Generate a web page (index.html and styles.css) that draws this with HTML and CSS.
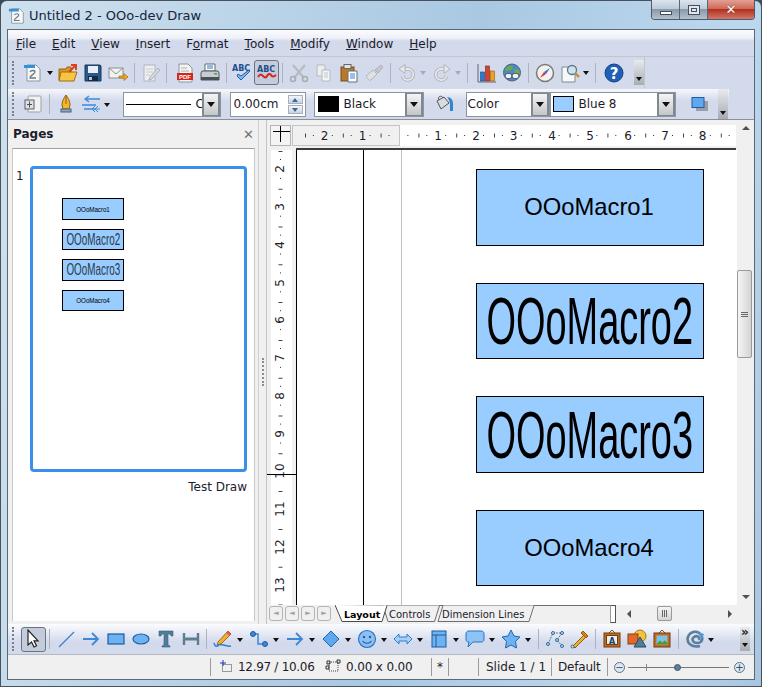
FILE: index.html
```html
<!DOCTYPE html>
<html lang="en">
<head>
<meta charset="utf-8">
<title>Untitled 2 - OOo-dev Draw</title>
<link rel="stylesheet" href="styles.css">
</head>
<body>
<svg class="defs" width="0" height="0">
<symbol id="newdoc" viewBox="0 0 20 20"><path d="M4 2h9l4 4v12H4z" fill="#f7f7f5" stroke="#8b98a4"/><rect x="1" y="2" width="11" height="3" fill="#2f93e0"/><path d="M7 9c1-2 5-2 5 0s-5 3-5 6h6" fill="none" stroke="#6d7a86" stroke-width="1.3"/></symbol>
<symbol id="open" viewBox="0 0 20 20"><path d="M1 6h7l1-2h4v13H1z" fill="#d99a20" stroke="#9a6410"/><path d="M3 9h16l-3 9H1z" fill="#f6c544" stroke="#a36c10"/><path d="M11 9l6-6M13 2h5v5" fill="none" stroke="#e0401c" stroke-width="2"/></symbol>
<symbol id="save" viewBox="0 0 20 20"><path d="M2 2h15l1 1v15H2z" fill="#2b5a8a" stroke="#17365a"/><rect x="5" y="3" width="10" height="7" fill="#e9eff5"/><rect x="5" y="13" width="10" height="5" fill="#0f2c4c"/><rect x="6" y="14" width="3" height="3" fill="#b8c6d6"/></symbol>
<symbol id="mail" viewBox="0 0 20 20"><rect x="1" y="5" width="14" height="10" fill="#f1f2f2" stroke="#8c8f92"/><path d="M1 5l7 6 7-6" fill="none" stroke="#8c8f92"/><path d="M11 13h5v-2.500l4 3.500-4 3.500V15h-5z" fill="#f0a81c" stroke="#a86f10" stroke-width=".7"/></symbol>
<symbol id="edit" viewBox="0 0 20 20"><path d="M3 2h11v16H3z" fill="#eceef2" stroke="#b2b6bc"/><path d="M5 6h7M5 9h7M5 12h4" stroke="#c8ccd2"/><path d="M9 14l8-9 2 2-8 9-3 1z" fill="#d8dade" stroke="#aeb2b8"/></symbol>
<symbol id="print" viewBox="0 0 20 20"><path d="M5 1h10v7H5z" fill="#fff" stroke="#5e6a74"/><path d="M7 3h6M7 5h6" stroke="#2f77bb"/><path d="M2 8h16l1 2v7H1v-7z" fill="#c8ccd0" stroke="#4e565c"/><rect x="1" y="14" width="18" height="3" fill="#4a5258"/><rect x="14" y="10" width="3" height="1.500" fill="#3fae49"/></symbol>
<symbol id="cut" viewBox="0 0 20 20"><path d="M4 2l11 13M16 2L5 15" stroke="#b6babe" stroke-width="2"/><circle cx="4" cy="16" r="2.500" fill="none" stroke="#a9adb2" stroke-width="1.500"/><circle cx="16" cy="16" r="2.500" fill="none" stroke="#a9adb2" stroke-width="1.500"/></symbol>
<symbol id="copy" viewBox="0 0 20 20"><path d="M3 2h8v11H3z" fill="#eceef0" stroke="#b5b9be"/><path d="M8 7h8v11H8z" fill="#f2f3f5" stroke="#b5b9be"/><path d="M10 10h4M10 12h4M10 14h4" stroke="#c4c8cc"/></symbol>
<symbol id="paste" viewBox="0 0 20 20"><rect x="2" y="4" width="13" height="14" fill="#b8792a" stroke="#7a4c14"/><rect x="5" y="1.500" width="7" height="4" fill="#e5e5e5" stroke="#666"/><path d="M9 8h9v11H9z" fill="#fff" stroke="#61707f"/><path d="M11 11h5M11 13h5M11 15h5" stroke="#3a80c5"/></symbol>
<symbol id="brush" viewBox="0 0 20 20"><path d="M2 13l7-6 4 4-6 6c-2 1-4-2-5-4z" fill="#dfe1e4" stroke="#b0b4b9"/><path d="M11 7l6-5 2 2-5 6z" fill="#c4c7cb" stroke="#adb1b6"/></symbol>
<symbol id="undo" viewBox="0 0 20 20"><path d="M7 6h4a5.500 5.500 0 1 1-5.500 7" fill="none" stroke="#b0b4ba" stroke-width="3.600"/><path d="M7 6h4a5.500 5.500 0 1 1-5.500 7" fill="none" stroke="#e6e8ec" stroke-width="1.800"/><path d="M8 1.500L2 6l6 4.500z" fill="#e6e8ec" stroke="#b0b4ba"/></symbol>
<symbol id="redo" viewBox="0 0 20 20"><path d="M13 6H9a5.500 5.500 0 1 0 5.500 7" fill="none" stroke="#b0b4ba" stroke-width="3.600"/><path d="M13 6H9a5.500 5.500 0 1 0 5.500 7" fill="none" stroke="#e6e8ec" stroke-width="1.800"/><path d="M12 1.500L18 6l-6 4.500z" fill="#e6e8ec" stroke="#b0b4ba"/></symbol>
<symbol id="chart" viewBox="0 0 20 20"><path d="M1 1v18h18" fill="none" stroke="#5c6670"/><rect x="3.500" y="9" width="4" height="9" fill="#3078c8" stroke="#1c4a80" stroke-width=".6"/><rect x="8.500" y="3" width="4" height="15" fill="#d9402a" stroke="#80221a" stroke-width=".6"/><rect x="13.500" y="8" width="4" height="10" fill="#f0a020" stroke="#8a5c12" stroke-width=".6"/></symbol>
<symbol id="globe" viewBox="0 0 20 20"><circle cx="10" cy="9.500" r="8.500" fill="#4e87c6" stroke="#456a8a"/><path d="M3 6c3-3 6-4 8-2l-2 3-5 1zM12 6l5 1 1 4-5-1z" fill="#71ac3c"/><path d="M3 11h14v3H3z" fill="#dde7ee"/><rect x="3" y="10.500" width="7" height="5" rx="2.500" fill="#eef2f5" stroke="#47525c"/><rect x="10" y="10.500" width="7" height="5" rx="2.500" fill="#eef2f5" stroke="#47525c"/></symbol>
<symbol id="compass" viewBox="0 0 20 20"><circle cx="10" cy="10" r="8.500" fill="#f2f2f0" stroke="#7d7a70" stroke-width="1.500"/><path d="M15 5L9 9l2 2z" fill="#2f6fd0"/><path d="M5 15l4-6 2 2z" fill="#e52a2a"/></symbol>
<symbol id="find" viewBox="0 0 20 20"><path d="M2 4h10l3 3v12H2z" fill="#f8f8f8" stroke="#7f8a94"/><circle cx="12" cy="7" r="4.500" fill="#c9e4f7" stroke="#627480" stroke-width="1.300"/><path d="M15 10l4 4" stroke="#c68c30" stroke-width="2.400"/></symbol>
<symbol id="pos" viewBox="0 0 20 20"><rect x="5" y="2" width="13" height="16" rx="1" fill="#f2f2f2" stroke="#9aa1a8"/><rect x="2" y="6" width="9" height="9" fill="#dfe1e3" stroke="#59636c"/><path d="M6.500 7.500v6M4 10.500h5" stroke="#4a5258"/></symbol>
<symbol id="pen" viewBox="0 0 20 20"><path d="M10 1c2 3 4 6 4 10l-1 4H7l-1-4c0-4 2-7 4-10z" fill="#f4b632" stroke="#8d5e10"/><path d="M10 2v8" stroke="#8d5e10"/><rect x="5" y="15" width="10" height="3" fill="#8fa6ba" stroke="#4a6076"/></symbol>
<symbol id="lines" viewBox="0 0 20 20"><path d="M19 5H5M8 2L4 5l4 3M1 11h14M15 15H3" fill="none" stroke="#3d8bdc" stroke-width="1.300"/><path d="M19 15h-5m3-3l-3 3 3 3m-6-3l3-3m0 6l-3-3" fill="none" stroke="#3d8bdc" stroke-width="1"/></symbol>
<symbol id="bucket" viewBox="0 0 20 20"><path d="M3 7l7-4 5 6-8 6z" fill="#d8dcdf" stroke="#555"/><path d="M5 6c-2-4 3-5 4-2" fill="none" stroke="#555"/><path d="M13 3c4 0 6 3 6 7v7h-3v-6c0-3-1-6-3-8z" fill="#2f86c8"/></symbol>
<symbol id="shadow" viewBox="0 0 20 20"><rect x="7" y="7" width="12" height="10" fill="#9a9ea8"/><rect x="3" y="3.500" width="12" height="10" fill="#5fa8ee" stroke="#1f5ca8"/></symbol>
<symbol id="cursor" viewBox="0 0 20 20"><path d="M5 1v15l3.500-3 2.500 5 2.500-1.200-2.500-5H15z" fill="#fff" stroke="#222" stroke-width="1.200"/></symbol>
<symbol id="line" viewBox="0 0 20 20"><path d="M3 18L18 3" stroke="#3e7fc6" stroke-width="1.300"/></symbol>
<symbol id="arrow" viewBox="0 0 20 20"><path d="M2 10h15M11 4l6 6-6 6" fill="none" stroke="#3e86d6" stroke-width="1.800"/></symbol>
<symbol id="rect" viewBox="0 0 20 20"><rect x="2" y="5" width="16" height="10" fill="#6fb2f0" stroke="#1c5aa4" stroke-width="1.200"/></symbol>
<symbol id="ellipse" viewBox="0 0 20 20"><ellipse cx="10" cy="10" rx="8" ry="5" fill="#6fb2f0" stroke="#1c5aa4" stroke-width="1.200"/></symbol>
<symbol id="tee" viewBox="0 0 20 20"><path d="M3 2h14v5h-2l-1-2h-2v11l2 1v1H6v-1l2-1V5H6L5 7H3z" fill="#4f7d99" stroke="#3a6078" stroke-width=".6"/></symbol>
<symbol id="dim" viewBox="0 0 20 20"><path d="M3 4v12M17 4v12" stroke="#5e7c92" stroke-width="2.400"/><path d="M3 10h14" stroke="#5e7c92" stroke-width="3"/></symbol>
<symbol id="pencil" viewBox="0 0 20 20"><path d="M5 13L15 2l3 3L8 15l-4 1z" fill="#f0b030" stroke="#a06c18"/><path d="M14 3l3 3" stroke="#e2487a" stroke-width="2"/><path d="M1 14c1 4 3 4 5 2s6 2 12 1" fill="none" stroke="#2f80d0" stroke-width="1.500"/></symbol>
<symbol id="conn" viewBox="0 0 20 20"><path d="M4 5h5v10h7" fill="none" stroke="#3e86d6" stroke-width="1.500"/><circle cx="4" cy="5" r="2.500" fill="#3e86d6" stroke="#1c5aa4"/><circle cx="16" cy="15" r="2.500" fill="#3e86d6" stroke="#1c5aa4"/></symbol>
<symbol id="diamond" viewBox="0 0 20 20"><path d="M10 2l8 8-8 8-8-8z" fill="#5fa8ee" stroke="#1f66b8"/></symbol>
<symbol id="smile" viewBox="0 0 20 20"><circle cx="10" cy="10" r="8.500" fill="#8cc0f2" stroke="#2b73c2" stroke-width="1.200"/><circle cx="7" cy="8" r="1.200" fill="#1f5ca8"/><circle cx="13" cy="8" r="1.200" fill="#1f5ca8"/><path d="M5.500 12c2 3 7 3 9 0" fill="none" stroke="#1f5ca8" stroke-width="1.200"/></symbol>
<symbol id="dbl" viewBox="0 0 20 20"><path d="M1 10l5-5v3h8V5l5 5-5 5v-3H6v3z" fill="#a8d0f6" stroke="#2f7fd0"/></symbol>
<symbol id="flow" viewBox="0 0 20 20"><rect x="3" y="2" width="14" height="16" fill="#6fb2f0" stroke="#1c5aa4"/><path d="M3 6h14M7 6v12" stroke="#1c5aa4"/></symbol>
<symbol id="callout" viewBox="0 0 20 20"><path d="M4 2h12c2 0 3 1 3 3v5c0 2-1 3-3 3H8l-5 5 1-5c-2 0-3-1-3-3V5c0-2 1-3 3-3z" fill="#8cc4f6" stroke="#2b73c2"/></symbol>
<symbol id="star" viewBox="0 0 20 20"><path d="M10 1l3 6 6 1-4.500 4.500 1 6.500-5.500-3-5.500 3 1-6.500L1 8l6-1z" fill="#6fb2f0" stroke="#1f66b8"/></symbol>
<symbol id="points" viewBox="0 0 20 20"><path d="M3 15L8 4h9l-5 7 5 6" fill="none" stroke="#4c7d9c" stroke-dasharray="2 1"/><g fill="#b8dcf6" stroke="#2f6a94"><circle cx="3" cy="15" r="1.500"/><circle cx="8" cy="4" r="1.500"/><circle cx="17" cy="4" r="1.500"/><circle cx="12" cy="11" r="1.500"/><circle cx="17" cy="17" r="1.500"/></g></symbol>
<symbol id="glue" viewBox="0 0 20 20"><path d="M3 17L15 5l2 2L5 19z" fill="#f0b030" stroke="#8d5e10"/><path d="M13 2l5 5-2 2-5-5z" fill="#d87c1c" stroke="#8d5e10"/><circle cx="2.500" cy="17.500" r="1.500" fill="#bcd8ee" stroke="#3c6c94"/></symbol>
<symbol id="shapes" viewBox="0 0 20 20"><circle cx="13" cy="7" r="6" fill="#f4c23e" stroke="#a87a12"/><rect x="1" y="5" width="10" height="10" fill="#e4662a" stroke="#8c3a10"/><path d="M13 8l6 10H7z" fill="#4f7d99" stroke="#2a4a60"/></symbol>
<symbol id="pict" viewBox="0 0 20 20"><path d="M7 4l3-3 3 3" fill="none" stroke="#7a4c14"/><rect x="2" y="4" width="16" height="14" fill="#c66a1c" stroke="#6e3c10"/><rect x="4.500" y="6.500" width="11" height="9" fill="#7ec0ea"/><path d="M4.500 15.500l3-4 3 2 2-2 3 2v2z" fill="#4f9a34"/></symbol>
<symbol id="swirl" viewBox="0 0 20 20"><path d="M15 17C7 19 1 14 3 8s10-7 13-2 0 8-4 8-6-4-3-6 6 0 5 3" fill="none" stroke="#5a7f9c" stroke-width="2.600"/><path d="M13 3l6 2-2 5z" fill="#4d9ae0"/></symbol>
<symbol id="poscross" viewBox="0 0 16 16"><path d="M6 1v6M3 4h6" stroke="#2233bb"/><rect x="5.500" y="5.500" width="9" height="7" fill="none" stroke="#444" stroke-dasharray="1 1"/></symbol>
<symbol id="sizebox" viewBox="0 0 16 16"><rect x="4" y="3" width="9" height="9" fill="none" stroke="#444" stroke-dasharray="1 1"/><path d="M2 2h3v3H2zM12 1h3v3h-3zM1 7h3v3H1z" fill="none" stroke="#333"/></symbol>
</svg>

<div class="win">
  <header class="titlebar">
    <svg class="i title-icon"><use href="#newdoc"/></svg>
    <span class="title-text">Untitled 2 - OOo-dev Draw</span>
    <div class="caption">
      <span class="cap cap-min"><i></i></span>
      <span class="cap cap-max"><i></i></span>
      <span class="cap cap-close">&#x2715;</span>
    </div>
  </header>

  <div class="client">
    <nav class="menu">
      <span><u>F</u>ile</span><span><u>E</u>dit</span><span><u>V</u>iew</span><span><u>I</u>nsert</span><span>F<u>o</u>rmat</span><span><u>T</u>ools</span><span><u>M</u>odify</span><span><u>W</u>indow</span><span><u>H</u>elp</span>
    </nav>

    <div class="row row1">
      <div class="bar bar1">
        <span class="grip"></span>
        <span class="ic"><svg class="i"><use href="#newdoc"/></svg></span><span class="dd"></span>
        <span class="ic"><svg class="i"><use href="#open"/></svg></span>
        <span class="ic"><svg class="i"><use href="#save"/></svg></span>
        <span class="ic"><svg class="i"><use href="#mail"/></svg></span>
        <span class="sep"></span>
        <span class="ic"><svg class="i"><use href="#edit"/></svg></span>
        <span class="sep sep9"></span>
        <span class="ic"><svg class="i" viewBox="0 0 20 20"><path d="M4 1h9l4 4v14H4z" fill="#f4f4f4" stroke="#8f969c"/><path d="M6 5h6M6 8h8" stroke="#aab0b6"/><rect x="2" y="10" width="16" height="7" fill="#d3261c"/><text x="10" y="16" class="tiny" text-anchor="middle">PDF</text></svg></span>
        <span class="ic"><svg class="i"><use href="#print"/></svg></span>
        <span class="sep"></span>
        <span class="ic ic-tight"><svg class="i" viewBox="0 0 20 20"><text x="0" y="8" class="abc">ABC</text><path d="M5 13l4 4L18 8l-1-1-8 6-3-2z" fill="#7fb7ea" stroke="#1b64b0"/></svg></span>
        <span class="ic on"><svg class="i" viewBox="0 0 20 20"><text x="0" y="9" class="abc">ABC</text><path d="M1 14c2-3 3-3 5-1s3 2 4 0 3-3 4-1 3 2 5 0" fill="none" stroke="#d91f1f" stroke-width="2"/></svg></span>
        <span class="sep"></span>
        <span class="ic"><svg class="i"><use href="#cut"/></svg></span>
        <span class="ic"><svg class="i"><use href="#copy"/></svg></span>
        <span class="ic"><svg class="i"><use href="#paste"/></svg></span>
        <span class="ic"><svg class="i"><use href="#brush"/></svg></span>
        <span class="sep"></span>
        <span class="ic"><svg class="i"><use href="#undo"/></svg></span><span class="dd dd-off"></span>
        <span class="ic"><svg class="i"><use href="#redo"/></svg></span><span class="dd dd-off"></span>
        <span class="sep sep-wide"></span>
        <span class="ic"><svg class="i"><use href="#chart"/></svg></span>
        <span class="ic"><svg class="i"><use href="#globe"/></svg></span>
        <span class="sep"></span>
        <span class="ic"><svg class="i"><use href="#compass"/></svg></span>
        <span class="ic"><svg class="i"><use href="#find"/></svg></span><span class="dd"></span>
        <span class="sep sep9"></span>
        <span class="ic"><svg class="i" viewBox="0 0 20 20"><circle cx="10" cy="10" r="9" fill="#1f5fb4" stroke="#123f86"/><text x="10" y="15.500" class="q" text-anchor="middle">?</text></svg></span>
        <span class="more"></span>
      </div>
    </div>

    <div class="row row2">
      <div class="bar bar2">
        <span class="grip"></span>
        <span class="ic"><svg class="i"><use href="#pos"/></svg></span>
        <span class="sep"></span>
        <span class="ic"><svg class="i"><use href="#pen"/></svg></span>
        <span class="ic"><svg class="i"><use href="#lines"/></svg></span><span class="dd"></span>
        <div class="combo combo-line"><span class="stroke"></span><span class="clip">C</span><span class="btn"></span></div>
        <div class="combo combo-width"><span class="val">0.00cm</span><span class="spin"><b></b><b class="down"></b></span></div>
        <div class="combo combo-color"><span class="swatch swatch-black"></span><span class="val">Black</span><span class="btn"></span></div>
        <span class="ic ic-bucket"><svg class="i"><use href="#bucket"/></svg></span>
        <div class="combo combo-fill"><span class="val val-fill">Color</span><span class="btn"></span></div>
        <div class="combo combo-blue"><span class="swatch swatch-blue"></span><span class="val">Blue 8</span><span class="btn"></span></div>
        <span class="ic ic-shadow"><svg class="i"><use href="#shadow"/></svg></span>
        <span class="more"></span>
      </div>
    </div>

    <main class="main">
      <aside class="panel">
        <div class="panel-head"><span class="panel-title">Pages</span><span class="panel-close">&#x2715;</span></div>
        <div class="panel-body">
          <div class="thumb-row">
            <span class="num">1</span>
            <div class="thumb">
              <div class="t-shape t-small"><span>OOoMacro1</span></div>
              <div class="t-shape t-tall"><span>OOoMacro2</span></div>
              <div class="t-shape t-tall"><span>OOoMacro3</span></div>
              <div class="t-shape t-small"><span>OOoMacro4</span></div>
            </div>
          </div>
          <div class="thumb-label">Test Draw</div>
        </div>
      </aside>

      <div class="splitter"><span></span></div>

      <section class="doc">
        <div class="top">
          <span class="corner"></span>
          <svg class="hruler" width="444" height="21" viewBox="0 0 444 21">
            <rect x="0.500" y="0.500" width="107" height="20" class="r-off"/>
            <line x1="3" y1="10.500" x2="444" y2="10.500" class="r-dots" stroke-dashoffset="1"/>
            <line x1="0" y1="10.500" x2="444" y2="10.500" class="r-ticks"/>
            <g class="r-num" text-anchor="middle">
              <rect x="26" y="3" width="13" height="15" fill="#f0f0f0"/><rect x="64" y="3" width="13" height="15" fill="#f0f0f0"/>
              <rect x="140" y="3" width="13" height="15"/><rect x="178" y="3" width="13" height="15"/><rect x="215" y="3" width="13" height="15"/><rect x="253" y="3" width="13" height="15"/><rect x="291" y="3" width="13" height="15"/><rect x="329" y="3" width="13" height="15"/><rect x="367" y="3" width="13" height="15"/><rect x="404" y="3" width="13" height="15"/>
              <text x="32.500" y="15">2</text><text x="70.500" y="15">1</text><text x="146" y="15">1</text><text x="184" y="15">2</text><text x="221.500" y="15">3</text><text x="260" y="15">4</text><text x="298" y="15">5</text><text x="336" y="15">6</text><text x="373" y="15">7</text><text x="410.500" y="15">8</text>
            </g>
          </svg>
          <span class="top-rest"></span>
        </div>
        <div class="middle">
          <svg class="vruler" width="29" height="455" viewBox="0 0 29 455">
            <rect x="4" y="0" width="21" height="455" fill="#fff"/>
            <line x1="13.500" y1="0" x2="13.500" y2="455" class="r-vdots"/>
            <line x1="13.500" y1="0" x2="13.500" y2="455" class="r-vticks"/>
            <g class="r-vnums" text-anchor="middle">
              <g fill="#fff" stroke="none"><rect x="6" y="12" width="15" height="14"/><rect x="6" y="50" width="15" height="14"/><rect x="6" y="88" width="15" height="14"/><rect x="6" y="126" width="15" height="14"/><rect x="6" y="163" width="15" height="14"/><rect x="6" y="201" width="15" height="14"/><rect x="6" y="239" width="15" height="14"/><rect x="6" y="277" width="15" height="14"/><rect x="6" y="310" width="15" height="22"/><rect x="6" y="348" width="15" height="22"/><rect x="6" y="386" width="15" height="22"/><rect x="6" y="424" width="15" height="22"/></g>
              <text transform="translate(17 19) rotate(-90)">2</text><text transform="translate(17 57) rotate(-90)">3</text><text transform="translate(17 95) rotate(-90)">4</text><text transform="translate(17 133) rotate(-90)">5</text><text transform="translate(17 170) rotate(-90)">6</text><text transform="translate(17 208) rotate(-90)">7</text><text transform="translate(17 246) rotate(-90)">8</text><text transform="translate(17 284) rotate(-90)">9</text><text transform="translate(17 321) rotate(-90)">10</text><text transform="translate(17 359) rotate(-90)">11</text><text transform="translate(17 397) rotate(-90)">12</text><text transform="translate(17 435) rotate(-90)">13</text>
            </g>
            <line x1="0" y1="324.500" x2="29" y2="324.500" stroke="#000"/>
          </svg>
          <div class="canvas">
            <span class="v-line v-black"></span>
            <span class="v-line v-gray"></span>
            <div class="shape s1"><span class="reg">OOoMacro1</span></div>
            <div class="shape s2"><span class="big">OOoMacro2</span></div>
            <div class="shape s3"><span class="big">OOoMacro3</span></div>
            <div class="shape s4"><span class="reg">OOoMacro4</span></div>
          </div>
          <div class="vscroll">
            <span class="tri up"></span>
            <span class="thumbbar"><i></i><i></i><i></i></span>
            <span class="tri dn"></span>
          </div>
        </div>
        <div class="bottom">
          <div class="navs"><span>&#x25C4;</span><span>&#x25C4;</span><span>&#x25BA;</span><span>&#x25BA;</span></div>
          <svg class="tabs" width="275" height="19" viewBox="0 0 275 19">
            <path d="M0 .5h275" stroke="#6e6e6e"/>
            <path d="M104.500 .5l-5 16H53l-5-16" fill="#f0f0f0" stroke="#6e6e6e"/>
            <path d="M199 .5l-5 16H103l5-16" fill="#f0f0f0" stroke="#6e6e6e"/>
            <path d="M0 0l7 16.500h40l5-16z" fill="#fff"/>
            <path d="M0 0l7 16.500h40l5-16" fill="none" stroke="#4a4a4a"/>
            <text x="9" y="13" class="tab-on">Layout</text>
            <text x="54" y="13" class="tab">Controls</text>
            <text x="107" y="13" class="tab">Dimension Lines</text>
          </svg>
          <span class="resize"></span>
          <div class="hscroll">
            <span class="tri lf"></span>
            <span class="hthumb"><i></i><i></i><i></i></span>
            <span class="tri rt"></span>
          </div>
        </div>
      </section>
    </main>

    <div class="bar3">
      <span class="grip"></span>
      <span class="ic on"><svg class="i"><use href="#cursor"/></svg></span>
      <span class="sep"></span>
      <span class="ic"><svg class="i"><use href="#line"/></svg></span>
      <span class="ic"><svg class="i"><use href="#arrow"/></svg></span>
      <span class="ic"><svg class="i"><use href="#rect"/></svg></span>
      <span class="ic"><svg class="i"><use href="#ellipse"/></svg></span>
      <span class="ic"><svg class="i"><use href="#tee"/></svg></span>
      <span class="ic"><svg class="i"><use href="#dim"/></svg></span>
      <span class="sep"></span>
      <span class="ic"><svg class="i"><use href="#pencil"/></svg></span><span class="dd"></span>
      <span class="ic"><svg class="i"><use href="#conn"/></svg></span><span class="dd"></span>
      <span class="ic"><svg class="i"><use href="#arrow"/></svg></span><span class="dd"></span>
      <span class="ic"><svg class="i"><use href="#diamond"/></svg></span><span class="dd"></span>
      <span class="ic"><svg class="i"><use href="#smile"/></svg></span><span class="dd"></span>
      <span class="ic"><svg class="i"><use href="#dbl"/></svg></span><span class="dd"></span>
      <span class="ic"><svg class="i"><use href="#flow"/></svg></span><span class="dd"></span>
      <span class="ic"><svg class="i"><use href="#callout"/></svg></span><span class="dd"></span>
      <span class="ic"><svg class="i"><use href="#star"/></svg></span><span class="dd"></span>
      <span class="sep"></span>
      <span class="ic"><svg class="i"><use href="#points"/></svg></span>
      <span class="ic"><svg class="i"><use href="#glue"/></svg></span>
      <span class="sep"></span>
      <span class="ic"><svg class="i" viewBox="0 0 20 20"><path d="M7 4l3-3 3 3" fill="none" stroke="#7a4c14"/><rect x="2" y="4" width="16" height="14" fill="#c66a1c" stroke="#6e3c10"/><rect x="4.500" y="6.500" width="11" height="9" fill="#e8eef4" stroke="#6e3c10"/><text x="10" y="14.500" class="abc2" text-anchor="middle">A</text></svg></span>
      <span class="ic"><svg class="i"><use href="#shapes"/></svg></span>
      <span class="ic"><svg class="i"><use href="#pict"/></svg></span>
      <span class="sep"></span>
      <span class="ic"><svg class="i"><use href="#swirl"/></svg></span><span class="dd"></span>
      <span class="more more3"><em>&raquo;</em></span>
    </div>

    <footer class="status">
      <span class="cell c-blank"></span>
      <span class="cell c-pos"><svg class="si"><use href="#poscross"/></svg>12.97 / 10.06</span>
      <span class="cell c-size"><svg class="si"><use href="#sizebox"/></svg>0.00 x 0.00</span>
      <span class="cell c-star">*</span>
      <span class="cell c-e"></span>
      <span class="cell c-slide">Slide 1 / 1</span>
      <span class="cell c-def">Default</span>
      <span class="cell c-zoom">
        <span class="zbtn">&minus;</span>
        <span class="track"><i class="mark"></i><i class="knob"></i></span>
        <span class="zbtn">+</span>
      </span>
    </footer>
  </div>
</div>
</body>
</html>
```

FILE: styles.css
```css
* { box-sizing: border-box; }
html, body { margin: 0; padding: 0; width: 762px; height: 687px; overflow: hidden; background: #3d4a58; }
body { font-family: "DejaVu Sans", sans-serif; color: #1c1c2c; }
.defs { position: absolute; }
.tiny { font: bold 6px "Liberation Sans", sans-serif; fill: #fff; }
.abc { font: bold 8px "DejaVu Sans", sans-serif; fill: #1c4f8c; }
.abc2 { font: bold 8px "DejaVu Sans", sans-serif; fill: #20405e; }
.q { font: bold 15px "DejaVu Sans", sans-serif; fill: #fff; }

.win {
  width: 762px; height: 687px;
  border: 1px solid #46535f;
  border-radius: 7px 7px 0 0;
  padding: 0 6px 6px 6px;
  display: flex; flex-direction: column;
  background: linear-gradient(100deg, #cfe1ee 0%, #a9c8e2 55%, #bcd8ee 85%, #a8c6e0 100%);
}
.titlebar { height: 28px; flex: none; display: flex; align-items: flex-start; position: relative; padding: 6px 0 0 1px; }
.i { width: 20px; height: 20px; display: block; }
.title-icon { width: 18px; height: 18px; }
.title-text { margin-left: 3px; font: 13px/18px "DejaVu Sans", sans-serif; color: #15243a; }
.caption { position: absolute; top: -1px; right: 0; display: flex; height: 20px; border: 1px solid #4e5a66; border-top: 0; border-radius: 0 0 4px 4px; overflow: hidden; }
.cap { display: flex; align-items: center; justify-content: center; height: 19px; }
.cap-min, .cap-max { width: 28px; background: linear-gradient(#dbe5ee, #bccada 45%, #8b99a9 50%, #b3c0cf); border-right: 1px solid #5a6672; }
.cap-min i { width: 12px; height: 4px; border: 1px solid #444f5a; background: #fff; margin-top: 6px; }
.cap-max i { width: 12px; height: 10px; border: 1px solid #444f5a; background: #dfe6ee; box-shadow: inset 0 0 0 2px #dfe6ee, inset 0 0 0 3px #444f5a; }
.cap-close { width: 46px; background: linear-gradient(#e2a094, #cf6a58 45%, #b4301e 50%, #d0796a); color: #fff; font: bold 13px "DejaVu Sans", sans-serif; text-shadow: 0 0 1px #5a1a10; }

.client { flex: none; width: 748px; height: 651px; border: 1px solid #5b6874; background: #d3daec; display: flex; flex-direction: column; }

.menu { height: 27px; flex: none; display: flex; align-items: center; padding: 1px 0 0 8px; background: linear-gradient(#fafbfd 0, #eef1f8 8px, #d3daec 11px); font: 12px "DejaVu Sans", sans-serif; border-bottom: 1px solid #c4c6cc; }
.menu span { margin-right: 16px; white-space: nowrap; }

.row { flex: none; background: #d3daec; }
.row1 { height: 32px; }
.row2 { height: 30px; }
.bar { display: flex; align-items: center; height: 100%; }
.bar1 { width: 637px; background: #d3daec; border-right: 1px solid #c2c5cb; border-bottom: 1px solid #d8dbe2; }
.bar2 { width: 721px; background: linear-gradient(#f6f7fb, #d3daec 40%); }
.bar3 { height: 31px; flex: none; display: flex; align-items: center; background: linear-gradient(#fbfcfe, #e4e8f3 35%, #d3daec 60%); border-bottom: 1px solid #b4b8c0; }
.grip { flex: none; width: 12.500px; height: 24px; position: relative; }
.grip::before { content: ""; position: absolute; left: 4px; top: 0; bottom: 0; width: 2px; border-left: 2px dotted #77808e; }
.ic { flex: none; width: 25px; height: 25px; display: flex; align-items: center; justify-content: center; }
.ic.on { background: #c4ccdc; border: 1px solid #6b7380; border-radius: 3px; }
.ic-tight { width: 24px; }
.dd { flex: none; width: 10px; height: 25px; position: relative; }
.bar3 .dd { width: 11px; }
.dd::after { content: ""; position: absolute; left: 1px; top: 11px; border: 3.500px solid transparent; border-top: 4px solid #111; border-bottom: 0; }
.dd-off::after { border-top-color: #a8acb2; }
.sep { flex: none; width: 7.500px; height: 20px; position: relative; }
.sep9 { width: 9.500px; }
.sep-wide { width: 10.500px; }
.sep-wide::before { left: 5px; }
.sep::before { content: ""; position: absolute; left: 3px; top: 0; bottom: 0; width: 1px; background: #aeb2bb; }
.more { flex: none; width: 10px; height: 25px; background: linear-gradient(#e8eaee, #a8acb2); position: relative; margin-left: 6px; }
.more::after { content: ""; position: absolute; left: 2px; bottom: 4px; border: 3px solid transparent; border-top: 4px solid #111; border-bottom: 0; }
.bar1 .more { margin-left: 7px; }
.bar2 .more { height: 30px; margin-left: 6px; }
.ic-shadow { margin-left: 11px; }
.ic-bucket { margin: 0 9px 0 8px; }

.combo { flex: none; height: 25px; display: flex; align-items: center; background: #fff; border: 1px solid #8a95a2; font: 12px "DejaVu Sans", sans-serif; position: relative; overflow: hidden; }
.btn { position: absolute; right: 0; top: 0; bottom: 0; width: 18px; background: linear-gradient(#f4f4f4, #c4c6ca); border: 2px solid #808890; border-width: 1px 2px; }
.btn::after { content: ""; position: absolute; left: 3px; top: 8px; border: 4px solid transparent; border-top: 5px solid #111; border-bottom: 0; }
.combo-line { width: 98px; margin-left: 9.500px; padding-left: 2px; }
.stroke { flex: none; width: 65px; height: 1px; background: #000; margin-right: 5px; }
.clip { flex: none; width: 9px; overflow: hidden; }
.combo-width { width: 76px; margin-left: 9px; padding-left: 3px; }
.spin { position: absolute; right: 2px; top: 2px; width: 15px; height: 19px; display: flex; flex-direction: column; gap: 1px; }
.spin b { flex: 1; background: linear-gradient(#f2f4f8, #ccd3e0); border: 1px solid #a8b0bc; position: relative; }
.spin b::after { content: ""; position: absolute; left: 3px; top: 2px; border: 3px solid transparent; border-bottom: 4px solid #3a6a9a; border-top: 0; }
.spin b.down::after { border-top: 4px solid #3a6a9a; border-bottom: 0; }
.combo-color { width: 110px; margin-left: 8px; padding-left: 3px; }
.swatch { flex: none; width: 21px; height: 16px; margin-right: 5px; }
.swatch-black { background: #000; }
.swatch-blue { background: #99ccff; border: 1px solid #000; }
.combo-fill { width: 84px; padding-left: 1px; }
.combo-blue { width: 126px; padding-left: 2px; }
.val { white-space: nowrap; }

.main { height: 505px; flex: none; display: flex; background: #f0f0f0; border-top: 1px solid #8d9096; }
.panel { width: 250px; flex: none; padding: 0 3px 3px 4px; display: flex; flex-direction: column; }
.panel-head { height: 28px; flex: none; display: flex; align-items: center; justify-content: space-between; padding: 0 1px 0 1px; }
.panel-title { font: bold 12px "DejaVu Sans", sans-serif; color: #1c1c2c; }
.panel-close { font: bold 13px "DejaVu Sans", sans-serif; color: #6e747a; }
.panel-body { flex: 1; background: #fff; border-top: 1px solid #a0a0a0; border-left: 1px solid #c8c8c8; border-right: 1px solid #c8c8c8; padding: 17px 7px 0 3px; }
.thumb-row { display: flex; }
.num { width: 14px; font: 12px "DejaVu Sans", sans-serif; padding-top: 3px; flex: none; }
.thumb { width: 218px; height: 306px; border: 3px solid #3a8fea; border-radius: 4px; padding: 29px 0 0 29px; display: flex; flex-direction: column; }
.t-shape { width: 62px; background: #99ccff; border: 1px solid #000; display: flex; align-items: center; justify-content: center; overflow: hidden; }
.t-small { height: 22px; }
.t-small:last-child { height: 21px; }
.t-tall { height: 22px; }
.t-small + .t-tall { height: 21px; }
.t-shape + .t-shape { margin-top: 9px; }
.t-small span { font: 6.300px "Liberation Sans", sans-serif; letter-spacing: -.1px; color: #000; }
.t-tall span { font: 17px "Liberation Sans", sans-serif; transform: scaleX(.58); white-space: nowrap; color: #2a3a4a; }
.thumb-label { text-align: right; font: 12px "DejaVu Sans", sans-serif; margin-top: 8px; }

.splitter { width: 9px; flex: none; display: flex; align-items: center; justify-content: center; border-left: 1px solid #d0d0d0; border-right: 1px solid #c4c4c4; }
.splitter span { width: 2px; height: 28px; border-left: 2px dotted #8a8e94; }

.doc { flex: 1; min-width: 0; display: flex; flex-direction: column; }
.top { height: 30px; flex: none; display: flex; align-items: flex-start; padding: 5px 0 0 3px; position: relative; }
.top::after { content: ""; position: absolute; left: 29px; width: 440px; bottom: 0; height: 2px; background: #3c3c3c; }
.corner { flex: none; width: 21px; height: 21px; border: 1px solid #b4b4b4; background: linear-gradient(#000,#000) 2px 5px/17px 1px no-repeat, linear-gradient(#000,#000) 9px 0/1px 16px no-repeat, #f4f4f4; margin-right: 1px; }
.hruler { flex: none; display: block; background: #fff; }
.r-off { fill: #f0f0f0; stroke: #c4c4c4; }
.r-dots { stroke: #333; stroke-width: 1; stroke-dasharray: 1 17.900; }
.r-ticks { stroke: #444; stroke-width: 4; stroke-dasharray: 1 36.800; stroke-dashoffset: -13; }
.r-num rect { fill: #fff; }
.r-num rect[fill] { fill: #f0f0f0; }
.r-num text, .r-vnums text { font: 12px "DejaVu Sans", sans-serif; fill: #1c1c2c; }
.r-vdots { stroke: #333; stroke-width: 1; stroke-dasharray: 1 17.900; stroke-dashoffset: 9.900; }
.r-vticks { stroke: #444; stroke-width: 4; stroke-dasharray: 1 36.800; stroke-dashoffset: -0.900; }
.top-rest { flex: 1; }
.middle { height: 455px; flex: none; display: flex; }
.vruler { flex: none; display: block; }
.canvas { width: 441px; flex: none; background: #fff; border-left: 1px solid #000; position: relative; overflow: hidden; }
.v-line { position: absolute; top: 0; bottom: 0; width: 1px; }
.v-black { left: 66px; background: #000; }
.v-gray { left: 104px; background: #c0c0c0; }
.shape { position: absolute; left: 179px; width: 228px; background: #99ccff; border: 1px solid #000; display: flex; align-items: center; justify-content: center; overflow: hidden; }
.s1 { top: 19px; height: 77px; }
.s2 { top: 133px; height: 76px; }
.s3 { top: 246px; height: 77px; }
.s4 { top: 360px; height: 76px; }
.reg { font: 23.800px "Liberation Sans", sans-serif; color: #000; white-space: nowrap; margin-right: 2px; margin-top: -1px; }
.big { font: 66px "Liberation Sans", sans-serif; color: #000; white-space: nowrap; transform: scaleX(.575); display: block; }
.vscroll { flex: 1; display: flex; flex-direction: column; align-items: center; background: #f0f0f0; position: relative; margin-top: -30px; padding-top: 6px; }
.vscroll .thumbbar { position: absolute; top: 150px; left: 0; width: 15px; height: 88px; background: linear-gradient(90deg, #f4f4f4, #d4d4d4); border: 1px solid #9a9a9a; border-radius: 2px; display: flex; flex-direction: column; align-items: center; justify-content: center; gap: 1px; }
.thumbbar i { width: 7px; height: 1px; background: #666; }
.tri { width: 0; height: 0; border: 4px solid transparent; }
.up { border-top: 0; border-bottom: 4px solid #505050; }
.dn { border-bottom: 0; border-top: 4px solid #505050; margin-top: auto; margin-bottom: 6px; }
.lf { border-left: 0; border-right: 4px solid #505050; }
.rt { border-right: 0; border-left: 4px solid #505050; margin-left: auto; }

.bottom { flex: 1; display: flex; align-items: flex-start; padding-left: 2px; background: #f0f0f0; }
.navs { flex: none; width: 66px; height: 17px; display: flex; gap: 2px; margin-top: 1px; }
.navs span { width: 14px; height: 15px; border: 1px solid #b4b4b4; border-radius: 3px; font: 7px/13px "DejaVu Sans", sans-serif; text-align: center; color: #a0a0a0; }
.tabs { flex: none; display: block; }
.tab { font: 10px "DejaVu Sans", sans-serif; fill: #1c1c2c; }
.tab-on { font: bold 9.500px "DejaVu Sans", sans-serif; fill: #000; }
.resize { flex: none; width: 6px; height: 18px; background: #fff; border: 1px solid #555; border-left-color: #999; }
.hscroll { flex: none; width: 122px; height: 18px; display: flex; align-items: center; padding: 0 6px 0 11px; position: relative; }
.hthumb { position: absolute; left: 41px; top: 1px; width: 15px; height: 15px; border: 1px solid #9a9a9a; border-radius: 2px; background: linear-gradient(#f4f4f4, #d4d4d4); display: flex; justify-content: center; align-items: center; gap: 1px; }
.hthumb i { width: 1px; height: 7px; background: #666; }

.status { flex: 1; display: flex; align-items: center; background: #f0f0f0; font: 12px "DejaVu Sans", sans-serif; }
.cell { flex: none; height: 18px; display: flex; align-items: center; white-space: nowrap; border-right: 1px solid #9a9a9a; }
.si { width: 16px; height: 16px; flex: none; margin-right: 5px; }
.c-blank { width: 203px; }
.c-pos { border: 0; padding-left: 6px; width: 108px; letter-spacing: -.3px; }
.c-size { width: 113px; padding-left: 6px; letter-spacing: -.15px; }
.c-star { width: 17px; justify-content: center; }
.c-e { width: 30px; }
.c-slide { width: 73px; padding-left: 7px; }
.c-def { width: 56px; padding-left: 6px; letter-spacing: -.2px; }
.c-zoom { flex: 1; border: 0; padding: 0 9px 0 6px; gap: 3px; }
.zbtn { width: 11px; height: 11px; flex: none; border: 1px solid #5c7488; border-radius: 50%; background: #dfe8f0; font: 10px/9px "DejaVu Sans", sans-serif; text-align: center; color: #24507a; }
.track { flex: 1; height: 1px; background: #777; position: relative; margin-right: 2px; }
.mark { position: absolute; left: 18px; top: -3px; width: 1px; height: 7px; background: #888; }
.knob { position: absolute; left: 46px; top: -3px; width: 7px; height: 7px; border-radius: 50%; background: #5d7f9a; border: 1px solid #3c5c74; }
.more3 { margin-left: 22px; height: 24px; }
.more3 em { position: absolute; left: 1px; top: -2px; font: bold 12px "DejaVu Sans", sans-serif; color: #222; font-style: normal; }
```
